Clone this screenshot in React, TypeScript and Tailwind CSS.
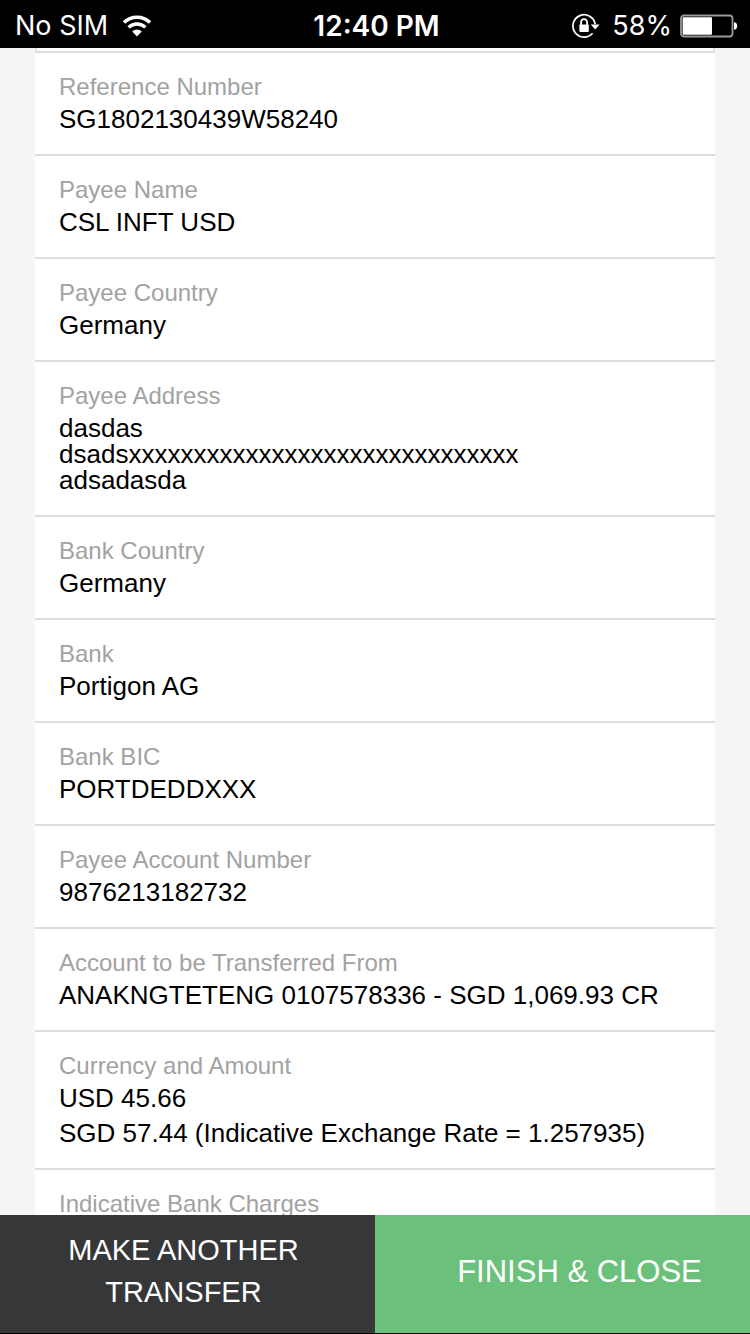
import React from "react";

type Detail = { label: string; lines: string[]; spaced?: boolean };

const details: Detail[] = [
  { label: "Reference Number", lines: ["SG1802130439W58240"] },
  { label: "Payee Name", lines: ["CSL INFT USD"] },
  { label: "Payee Country", lines: ["Germany"] },
  {
    label: "Payee Address",
    lines: ["dasdas", "dsadsxxxxxxxxxxxxxxxxxxxxxxxxxxxxxx", "adsadasda"],
  },
  { label: "Bank Country", lines: ["Germany"] },
  { label: "Bank", lines: ["Portigon AG"] },
  { label: "Bank BIC", lines: ["PORTDEDDXXX"] },
  { label: "Payee Account Number", lines: ["9876213182732"] },
  {
    label: "Account to be Transferred From",
    lines: ["ANAKNGTETENG 0107578336 - SGD 1,069.93 CR"],
  },
  {
    label: "Currency and Amount",
    lines: ["USD 45.66", "SGD 57.44 (Indicative Exchange Rate = 1.257935)"],
    spaced: true,
  },
  { label: "Indicative Bank Charges", lines: [] },
];

function WifiIcon() {
  return (
    <svg width="30" height="22" viewBox="0 0 30 22" fill="none" aria-hidden="true">
      <path d="M2 7.6a18.4 18.4 0 0 1 26 0" stroke="white" strokeWidth="3.6" />
      <path d="M6.6 12.4a11.9 11.9 0 0 1 16.8 0" stroke="white" strokeWidth="3.4" />
      <path d="M15 21.4l-4.8-4.9a6.8 6.8 0 0 1 9.6 0z" fill="white" />
    </svg>
  );
}

function RotationLockIcon() {
  return (
    <svg width="28" height="26" viewBox="0 0 28 26" fill="none" aria-hidden="true">
      <path d="M23.2 11.2A11.2 11.2 0 1 0 20.6 20.3" stroke="white" strokeWidth="1.7" />
      <path d="M18.8 11.4h8.8l-4.4 5z" fill="white" />
      <rect x="7.4" y="11.4" width="9.4" height="7.6" rx="0.8" fill="white" />
      <path d="M9.1 12V9.2a3 3 0 0 1 6 0V12" stroke="white" strokeWidth="1.8" />
    </svg>
  );
}

function BatteryIcon() {
  return (
    <svg width="58" height="24" viewBox="0 0 58 24" fill="none" aria-hidden="true">
      <rect x="1" y="1.5" width="51.5" height="21" rx="3" stroke="#9a9a9a" strokeWidth="1.8" />
      <rect x="2.6" y="3.2" width="29.4" height="17.6" rx="1" fill="white" />
      <path d="M54 8.3c2 0 3.2 1.4 3.2 3.7S56 15.7 54 15.7z" fill="white" />
    </svg>
  );
}

function DetailRow({ label, lines, spaced }: Detail) {
  return (
    <div className="border-b-2 border-[#dedede] px-6 pt-[18px] pb-[22px]">
      <dt className="text-[24px] leading-[32px] text-[#a2a2a2]">{label}</dt>
      <dd
        className={`mt-[3px] flex flex-col text-[26px] leading-[26px] break-words text-black ${
          spaced ? "gap-[9px]" : ""
        }`}
      >
        {lines.map((line) => (
          <span key={line}>{line}</span>
        ))}
      </dd>
    </div>
  );
}

export default function App() {
  return (
    <div className="flex h-screen flex-col bg-[#f5f5f5] font-['Liberation_Sans',Arial,sans-serif]">
      <header className="grid h-12 shrink-0 grid-cols-[1fr_auto_1fr] items-center bg-black pt-[3px] pr-3 pl-[15px] font-['Inter',sans-serif] text-[27px] leading-[32px] text-white">
        <div className="flex items-center gap-[14px]">
          <span>No SIM</span>
          <WifiIcon />
        </div>
        <time className="text-[28px] font-semibold">12:40 PM</time>
        <div className="flex items-center justify-end gap-2">
          <RotationLockIcon />
          <span className="pl-1">58%</span>
          <BatteryIcon />
        </div>
      </header>

      <main className="min-h-0 flex-1 overflow-y-auto px-[35px] [scrollbar-width:none]">
        <div className="h-[5px] border-x-2 border-b-2 border-x-[#d9ead3] border-b-[#dedede] bg-white" />
        <dl className="bg-white">
          {details.map((detail) => (
            <DetailRow key={detail.label} {...detail} />
          ))}
        </dl>
      </main>

      <footer className="grid shrink-0 grid-cols-2 border-b border-black text-white">
        <button
          type="button"
          className="min-h-[118px] bg-[#363739] pr-[68px] pb-1.5 pl-[60px] text-[29px] leading-[42px]"
        >
          MAKE ANOTHER TRANSFER
        </button>
        <button
          type="button"
          className="min-h-[118px] bg-[#6bc17b] pb-1 pl-[34px] text-[31px] leading-[42px]"
        >
          FINISH &amp; CLOSE
        </button>
      </footer>
    </div>
  );
}
